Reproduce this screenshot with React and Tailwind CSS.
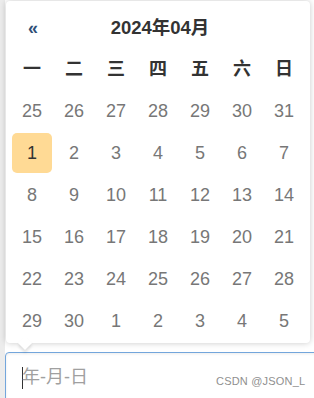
import React from "react";

const WEEK = ["一", "二", "三", "四", "五", "六", "日"];

const DAYS = [
  25, 26, 27, 28, 29, 30, 31,
  1, 2, 3, 4, 5, 6, 7,
  8, 9, 10, 11, 12, 13, 14,
  15, 16, 17, 18, 19, 20, 21,
  22, 23, 24, 25, 26, 27, 28,
  29, 30, 1, 2, 3, 4, 5,
];

export default function App() {
  return (
    <div
      className="relative w-[314px] h-[398px] overflow-hidden bg-white"
      style={{ fontFamily: '"Liberation Sans", Arial, "Noto Sans CJK SC", sans-serif' }}
    >
      <div className="absolute left-0 top-0 h-full w-[5px] bg-[#ececec]" />

      <div className="relative z-10 ml-[6px] mt-[1px] w-[304px] rounded-[4px] bg-white shadow-[0_0_6px_rgba(0,0,0,0.22)]">
        <div className="flex h-[48px] items-center pl-[22px] pr-[20px] pt-[6px]">
          <span className="w-[14px] text-[18px] font-bold leading-none text-[#2f4f77]">«</span>
          <span className="flex-1 text-center text-[18.5px] font-bold text-[#333] pr-[12px]">2024年04月</span>
        </div>
        <div className="grid grid-cols-7 px-[5px]">
          {WEEK.map((w) => (
            <div key={w} className="flex h-[41px] items-center justify-center text-[18px] font-bold text-[#333]">
              {w}
            </div>
          ))}
        </div>
        <div className="grid grid-cols-7 px-[5px] pb-[1px]">
          {DAYS.map((d, i) => (
            <div key={i} className="flex h-[42px] items-center justify-center p-[1px]">
              <div
                className={
                  i === 7
                    ? "flex h-full w-full items-center justify-center rounded-[5px] bg-[#ffda95] text-[18px] text-[#333]"
                    : "flex h-full w-full items-center justify-center text-[18px] text-[#777]"
                }
              >
                {d}
              </div>
            </div>
          ))}
        </div>
        <div className="absolute left-[14px] bottom-[-5px] h-[10px] w-[10px] rotate-45 bg-white shadow-[2px_2px_3px_rgba(0,0,0,0.12)]" />
      </div>

      <div className="relative ml-[5px] mt-[9px] flex h-[52px] w-[316px] items-center rounded-[4px] border border-[#73a6dc] bg-white pl-[16px] shadow-[inset_0_1px_3px_rgba(0,0,0,0.08)]">
        <span className="mr-[-1px] h-[22px] w-[1px] bg-[#333]" />
        <span className="text-[18px] text-[#a0a0a0] pb-[2px]">年-月-日</span>
        <span className="absolute left-[210px] top-[20px] text-[11px] tracking-[0.2px] text-[#8f8f8f]">
          CSDN @JSON_L
        </span>
      </div>
    </div>
  );
}
